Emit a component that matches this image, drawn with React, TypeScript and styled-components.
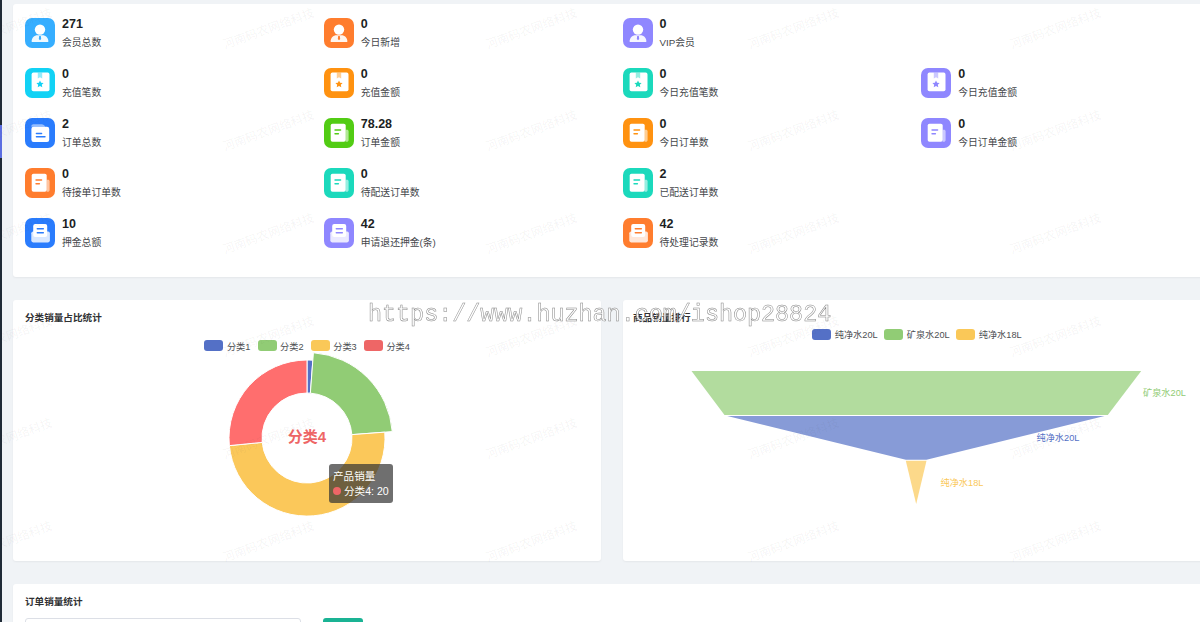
import React from 'react';
import styled, { createGlobalStyle } from 'styled-components';

type IconKind = 'user' | 'box' | 'folder' | 'doc' | 'tray';
type Stat = { value: string; label: string; color: string; icon: IconKind };

const BLUE = '#2a7cfd';
const SKY = '#36aeff';
const ORANGE = '#ff7d2e';
const PURPLE = '#8f87ff';
const CYAN = '#12d2f5';
const AMBER = '#ff9210';
const TEAL = '#1bd9bc';
const LIME = '#52cc14';

// null keeps the column empty
const statRows: (Stat | null)[][] = [
  [
    { value: '271', label: '会员总数', color: SKY, icon: 'user' },
    { value: '0', label: '今日新增', color: ORANGE, icon: 'user' },
    { value: '0', label: 'VIP会员', color: PURPLE, icon: 'user' },
    null,
  ],
  [
    { value: '0', label: '充值笔数', color: CYAN, icon: 'box' },
    { value: '0', label: '充值金额', color: AMBER, icon: 'box' },
    { value: '0', label: '今日充值笔数', color: TEAL, icon: 'box' },
    { value: '0', label: '今日充值金额', color: PURPLE, icon: 'box' },
  ],
  [
    { value: '2', label: '订单总数', color: BLUE, icon: 'folder' },
    { value: '78.28', label: '订单金额', color: LIME, icon: 'doc' },
    { value: '0', label: '今日订单数', color: AMBER, icon: 'doc' },
    { value: '0', label: '今日订单金额', color: PURPLE, icon: 'doc' },
  ],
  [
    { value: '0', label: '待接单订单数', color: ORANGE, icon: 'doc' },
    { value: '0', label: '待配送订单数', color: TEAL, icon: 'doc' },
    { value: '2', label: '已配送订单数', color: TEAL, icon: 'doc' },
    null,
  ],
  [
    { value: '10', label: '押金总额', color: BLUE, icon: 'tray' },
    { value: '42', label: '申请退还押金(条)', color: PURPLE, icon: 'tray' },
    { value: '42', label: '待处理记录数', color: ORANGE, icon: 'tray' },
    null,
  ],
];

const pieLegend = [
  { name: '分类1', color: '#5470c6' },
  { name: '分类2', color: '#91cc75' },
  { name: '分类3', color: '#fac858' },
  { name: '分类4', color: '#ee6666' },
];

const funnelLegend = [
  { name: '纯净水20L', color: '#5470c6' },
  { name: '矿泉水20L', color: '#91cc75' },
  { name: '纯净水18L', color: '#fac858' },
];

const pieSectors = [
  { from: 0, to: 4.3, outer: 78, color: '#5470c6' },
  { from: 4.3, to: 85.7, outer: 85.5, color: '#91cc75' },
  { from: 85.7, to: 264.4, outer: 78, color: '#fbc85a' },
  { from: 264.4, to: 360, outer: 78, color: '#ff6e6e' },
];

function sectorPath(from: number, to: number, inner: number, outer: number) {
  const point = (deg: number, r: number) => {
    const a = (deg * Math.PI) / 180;
    return `${(Math.sin(a) * r).toFixed(2)} ${(-Math.cos(a) * r).toFixed(2)}`;
  };
  const large = to - from > 180 ? 1 : 0;
  return `M${point(from, inner)} L${point(from, outer)} A${outer} ${outer} 0 ${large} 1 ${point(to, outer)} L${point(to, inner)} A${inner} ${inner} 0 ${large} 0 ${point(from, inner)} Z`;
}

function StatIcon({ kind, color }: { kind: IconKind; color: string }) {
  return (
    <IconBox $color={color}>
      <svg width="30" height="30" viewBox="0 0 30 30">
        {kind === 'user' && (
          <>
            <circle cx="15" cy="11.6" r="5.2" fill="#fff" />
            <path d="M6.6 23.6c0-3.8 2.6-6.4 6-6.4h4.8c3.4 0 6 2.6 6 6.4 0 .3-.2.4-.5.4H7.1c-.3 0-.5-.1-.5-.4z" fill="#fff" fillOpacity=".92" />
            <path d="M14.2 18h1.6l.4 3-1.2 1.2-1.2-1.2z" fill={color} />
          </>
        )}
        {kind === 'box' && (
          <>
            <rect x="6.6" y="4.6" width="17.9" height="18.6" rx="1.8" fill="#fff" />
            <path d="M12.8 4.6h4.4v6l-2.2-1.4-2.2 1.4z" fill={color} fillOpacity=".45" />
            <path d="M15 12.4l1.1 2.3 2.5.3-1.8 1.7.5 2.5-2.3-1.2-2.3 1.2.5-2.5-1.8-1.7 2.5-.3z" fill={color} />
          </>
        )}
        {kind === 'folder' && (
          <>
            <path d="M6.4 8c0-1 .8-1.8 1.8-1.8h8.4c1.6 0 3 1 3.6 2.6H6.4z" fill="#fff" fillOpacity=".5" />
            <rect x="6.4" y="8.8" width="17.8" height="15.2" rx="2.2" fill="#fff" />
            <rect x="10.7" y="14.8" width="6.6" height="1.5" rx=".7" fill={color} />
            <rect x="10.7" y="18" width="10" height="1.5" rx=".7" fill={color} />
          </>
        )}
        {kind === 'doc' && (
          <>
            <path d="M21.6 11.8h1.4c.9 0 1.6.7 1.6 1.6V22c0 1-.8 1.8-1.8 1.8h-1.2z" fill="#fff" fillOpacity=".55" />
            <rect x="6.7" y="5.8" width="15" height="18" rx="1.8" fill="#fff" />
            <rect x="10.3" y="11.3" width="7" height="1.4" rx=".7" fill={color} />
            <rect x="10.3" y="15" width="4.8" height="1.4" rx=".7" fill={color} />
          </>
        )}
        {kind === 'tray' && (
          <>
            <rect x="6.3" y="13.4" width="18.6" height="11" rx="1.8" fill="#fff" fillOpacity=".82" />
            <rect x="8.2" y="6" width="14" height="13" rx="2" fill="#fff" />
            <rect x="11.6" y="10" width="7.4" height="1.4" rx=".6" fill={color} />
            <rect x="11.6" y="14" width="7.4" height="1.4" rx=".6" fill={color} />
          </>
        )}
      </svg>
    </IconBox>
  );
}

function StatItem({ stat }: { stat: Stat }) {
  return (
    <StatCell>
      <StatIcon kind={stat.icon} color={stat.color} />
      <StatText>
        <StatValue>{stat.value}</StatValue>
        <StatLabel>{stat.label}</StatLabel>
      </StatText>
    </StatCell>
  );
}

function ChartLegend({ items, top, pitch }: { items: { name: string; color: string }[]; top: number; pitch: number }) {
  return (
    <Legend $top={top}>
      {items.map((item) => (
        <LegendItem key={item.name} $pitch={pitch}>
          <Swatch $color={item.color} />
          <span>{item.name}</span>
        </LegendItem>
      ))}
    </Legend>
  );
}

function PieChart() {
  return (
    <DonutSvg width="180" height="180" viewBox="-90 -90 180 180">
      {pieSectors.map((s) => (
        <path key={s.color} d={sectorPath(s.from, s.to, 45, s.outer)} fill={s.color} stroke="#fff" strokeWidth="1" />
      ))}
      <DonutLabel x="0" y="4" textAnchor="middle">分类4</DonutLabel>
    </DonutSvg>
  );
}

function FunnelChart() {
  return (
    <FunnelSvg width="587" height="150" viewBox="0 0 587 150">
      <polygon points="68.5,6 518.2,6 484.8,50 101.5,50" fill="#b2dc9e" />
      <polygon points="104.2,51 481.5,51 303.5,94.7 282.8,94.7" fill="#879bd7" />
      <polygon points="282.8,95.7 303.5,95.7 293.2,139" fill="#fcd98a" />
      <FunnelLabel x="520" y="31" fill="#91cc75">矿泉水20L</FunnelLabel>
      <FunnelLabel x="413.5" y="76" fill="#5470c6">纯净水20L</FunnelLabel>
      <FunnelLabel x="317.5" y="121" fill="#fac858">纯净水18L</FunnelLabel>
    </FunnelSvg>
  );
}

export default function App() {
  return (
    <Page>
      <GlobalStyle />
      <SideStrip>
        <SideActive />
      </SideStrip>
      <Main>
        <StatsCard>
          {statRows.map((row, i) => (
            <StatRow key={i}>
              {row.map((stat, j) => (stat ? <StatItem key={j} stat={stat} /> : <span key={j} />))}
            </StatRow>
          ))}
        </StatsCard>
        <ChartRow>
          <ChartCard>
            <CardTitle>分类销量占比统计</CardTitle>
            <ChartLegend items={pieLegend} top={14.5} pitch={53.2} />
            <PieChart />
            <Tooltip>
              <div>产品销量</div>
              <TooltipRow>
                <TooltipDot />
                分类4: 20
              </TooltipRow>
            </Tooltip>
          </ChartCard>
          <ChartCard>
            <FunnelTitle>商品销量排行</FunnelTitle>
            <ChartLegend items={funnelLegend} top={3} pitch={72} />
            <FunnelChart />
          </ChartCard>
        </ChartRow>
        <OrderCard>
          <CardTitle>订单销量统计</CardTitle>
          <FilterRow>
            <DateInput />
            <SearchButton />
          </FilterRow>
        </OrderCard>
      </Main>
      <WatermarkLayer>
        {Array.from({ length: 30 }, (_, i) => (
          <WatermarkText key={i}>河南码农网络科技</WatermarkText>
        ))}
      </WatermarkLayer>
      <SiteMark>https://www.huzhan.com/ishop28824</SiteMark>
    </Page>
  );
}

const GlobalStyle = createGlobalStyle`
  html, body {
    margin: 0;
    height: 622px;
    overflow: hidden;
    background: #f0f3f6;
  }
  body {
    font-family: "Liberation Sans", "Noto Sans CJK SC", sans-serif;
  }
`;

const Page = styled.div`
  position: relative;
  display: flex;
  width: 1200px;
  height: 622px;
  overflow: hidden;
  background: #f0f3f6;
`;
const SideStrip = styled.aside`
  flex: 0 0 2px;
  padding-top: 125px;
  background: #1f2a36;
`;
const SideActive = styled.div`
  height: 33px;
  background: #5b6ee1;
`;
const Main = styled.main`
  flex: 0 0 1208px;
  min-width: 0;
  padding: 4px 0 0 11px;
  box-sizing: border-box;
`;
const Card = styled.section`
  background: #fff;
  border-radius: 3px;
  box-shadow: 0 1px 2px rgba(0, 0, 0, 0.05);
`;
const StatsCard = styled(Card)`
  display: flex;
  flex-direction: column;
  gap: 20px;
  height: 273px;
  padding: 14px 12px 0;
  box-sizing: border-box;
`;
const StatRow = styled.div`
  display: grid;
  grid-template-columns: repeat(4, 298.75px);
  height: 30px;
`;
const StatCell = styled.div`
  display: flex;
  gap: 7px;
`;
const IconBox = styled.div<{ $color: string }>`
  width: 30px;
  height: 30px;
  border-radius: 7px;
  background: ${({ $color }) => $color};
  svg {
    display: block;
  }
`;
const StatText = styled.div`
  display: flex;
  flex-direction: column;
`;
const StatValue = styled.div`
  font-size: 12.5px;
  font-weight: 700;
  line-height: 14px;
  margin-top: -1px;
  color: #1c1f24;
`;
const StatLabel = styled.div`
  margin-top: 5px;
  font-size: 9.8px;
  line-height: 14px;
  color: #45474b;
`;
const ChartRow = styled.div`
  display: grid;
  grid-template-columns: 1fr 1fr;
  gap: 22px;
  margin-top: 23px;
`;
const ChartCard = styled(Card)`
  position: relative;
  height: 261px;
  padding-top: 11px;
  box-sizing: border-box;
`;
const CardTitle = styled.h3`
  margin: 0;
  padding-left: 12px;
  font-size: 9.6px;
  font-weight: 700;
  line-height: 14px;
  color: #303133;
`;
const FunnelTitle = styled(CardTitle)`
  padding-left: 10.5px;
`;
const Legend = styled.div<{ $top: number }>`
  display: flex;
  justify-content: center;
  height: 12px;
  padding-left: 8px;
  margin-top: ${({ $top }) => $top}px;
`;
const LegendItem = styled.div<{ $pitch: number }>`
  display: flex;
  align-items: center;
  gap: 3.5px;
  width: ${({ $pitch }) => $pitch}px;
  font-size: 9.2px;
  color: #4d4f53;
  white-space: nowrap;
`;
const Swatch = styled.i<{ $color: string }>`
  flex: 0 0 19px;
  height: 11px;
  border-radius: 3px;
  background: ${({ $color }) => $color};
`;
const DonutSvg = styled.svg`
  display: block;
  margin: -3.5px auto 0;
`;
const DonutLabel = styled.text`
  font-size: 15px;
  font-weight: 700;
  fill: #ee6666;
`;
const FunnelSvg = styled.svg`
  display: block;
  margin: 25px auto 0;
`;
const FunnelLabel = styled.text`
  font-size: 9.2px;
`;
const Tooltip = styled.div`
  position: absolute;
  left: 316px;
  top: 164px;
  width: 63.5px;
  height: 38.5px;
  padding: 5px 0 0 4px;
  box-sizing: border-box;
  border-radius: 3px;
  background: rgba(50, 50, 50, 0.7);
  font-size: 10.6px;
  line-height: 14.5px;
  color: #fff;
  white-space: nowrap;
`;
const TooltipRow = styled.div`
  display: flex;
  align-items: center;
  gap: 3px;
`;
const TooltipDot = styled.i`
  width: 8px;
  height: 8px;
  border-radius: 50%;
  background: #ee6666;
`;
const OrderCard = styled(Card)`
  height: 120px;
  margin-top: 23px;
  padding-top: 11px;
  box-sizing: border-box;
`;
const FilterRow = styled.div`
  display: flex;
  gap: 22px;
  margin: 9px 0 0 12px;
`;
const DateInput = styled.div`
  width: 276px;
  height: 32px;
  box-sizing: border-box;
  border: 1px solid #dcdfe6;
  border-radius: 3px;
  background: #fff;
`;
const SearchButton = styled.div`
  width: 40px;
  height: 32px;
  border-radius: 3px;
  background: #1ab394;
`;
const WatermarkLayer = styled.div`
  position: absolute;
  left: -125px;
  top: -24px;
  display: grid;
  grid-template-columns: repeat(5, 262.25px);
  grid-auto-rows: 102.6px;
  pointer-events: none;
`;
const WatermarkText = styled.span`
  place-self: center;
  font-size: 12px;
  white-space: nowrap;
  color: rgba(60, 60, 60, 0.06);
  transform: rotate(-20deg);
`;
const SiteMark = styled.div`
  position: absolute;
  left: 368px;
  top: 300px;
  font-family: "Liberation Mono", monospace;
  font-size: 23.4px;
  line-height: 30px;
  white-space: nowrap;
  color: rgba(255, 255, 255, 0.9);
  -webkit-text-stroke: 0.5px #868686;
  will-change: transform;
  pointer-events: none;
`;
